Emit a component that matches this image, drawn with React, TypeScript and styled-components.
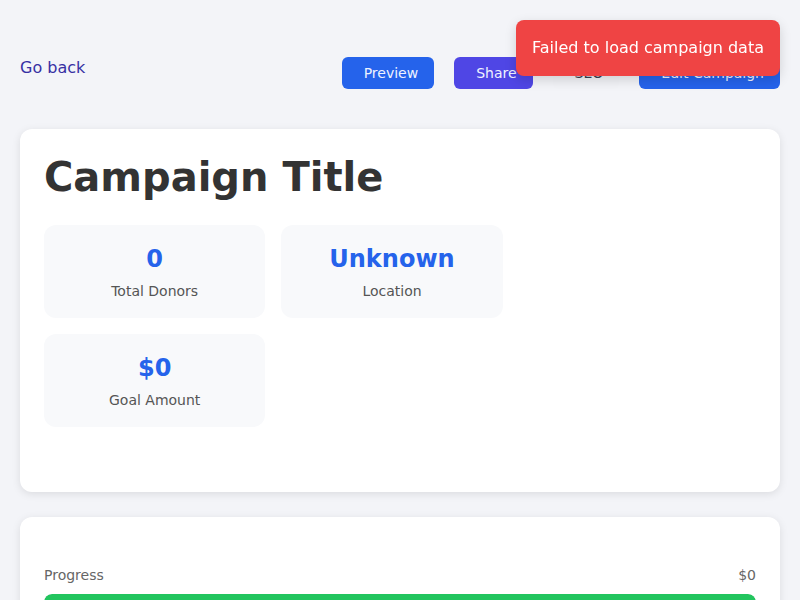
import React from "react";
import styled, { createGlobalStyle } from "styled-components";

const GlobalStyle = createGlobalStyle`
  * { box-sizing: border-box; }
  body {
    margin: 0;
    background: #f3f4f8;
    font-family: "DejaVu Sans", "Liberation Sans", sans-serif;
    color: #333;
  }
`;

const Page = styled.div`
  padding: 20px;
`;

const Header = styled.header`
  display: flex;
  justify-content: space-between;
  align-items: flex-start;
  margin-top: 37px;
  margin-bottom: 40px;
`;

const BackLink = styled.a`
  display: block;
  margin-top: 1px;
  color: #3730a3;
  font-size: 16px;
  text-decoration: none;
  cursor: pointer;
`;

const Actions = styled.div`
  display: flex;
  gap: 20px;
`;

const ActionButton = styled.button<{ $variant: "primary" | "indigo" | "plain" }>`
  height: 32px;
  padding: 0 16px 0 22px;
  border: none;
  border-radius: 6px;
  font-family: inherit;
  font-size: 14px;
  cursor: pointer;
  background: ${(p) =>
    p.$variant === "primary" ? "#2563eb" : p.$variant === "indigo" ? "#4f46e5" : "#f2f3f7"};
  color: ${(p) => (p.$variant === "plain" ? "#374151" : "#eef2ff")};
`;

const Card = styled.section<{ $padBottom?: number }>`
  background: #ffffff;
  border-radius: 12px;
  box-shadow: 0 2px 8px rgba(0, 0, 0, 0.1);
  padding: 24px 24px ${(p) => p.$padBottom ?? 24}px;
  margin-bottom: 25px;
`;

const Title = styled.h1`
  margin: 0 0 24px;
  font-size: 40px;
  line-height: 1.2;
  font-weight: 700;
  color: #333;
`;

const Layout = styled.div`
  display: grid;
  grid-template-columns: 2fr 1fr;
  gap: 24px;
`;

const StatsGrid = styled.div`
  display: grid;
  grid-template-columns: 1fr 1fr;
  gap: 16px;
`;

const Stat = styled.div`
  background: #f8f9fb;
  border-radius: 12px;
  padding: 20px 20px 19px;
  text-align: center;
`;

const StatValue = styled.div`
  font-size: 24px;
  line-height: 1.2;
  font-weight: 700;
  color: #2563eb;
  margin-bottom: 9px;
`;

const StatLabel = styled.div`
  font-size: 14px;
  color: #555;
`;

const ProgressBlock = styled.div`
  margin-top: 26px;
`;

const ProgressRow = styled.div`
  display: flex;
  justify-content: space-between;
  font-size: 14px;
  color: #666;
  margin-bottom: 11px;
`;

const Track = styled.div`
  height: 16px;
  border-radius: 8px;
  background: #e5e7eb;
  overflow: hidden;
`;

const Fill = styled.div`
  height: 100%;
  background: #22c55e;
  border-radius: 8px;
`;

const Toast = styled.div`
  position: fixed;
  top: 20px;
  right: 20px;
  background: #ef4444;
  color: #fff;
  font-size: 16px;
  line-height: 24px;
  padding: 16px;
  border-radius: 8px;
  box-shadow: 0 4px 12px rgba(0, 0, 0, 0.15);
  z-index: 10;
`;

const stats = [
  { value: "0", label: "Total Donors" },
  { value: "Unknown", label: "Location" },
  { value: "$0", label: "Goal Amount" },
];

export default function App() {
  const progress = 100;
  return (
    <>
      <GlobalStyle />
      <Page>
        <Header>
          <BackLink>Go back</BackLink>
          <Actions>
            <ActionButton $variant="primary">Preview</ActionButton>
            <ActionButton $variant="indigo">Share</ActionButton>
            <ActionButton $variant="plain">SEO</ActionButton>
            <ActionButton $variant="primary">Edit Campaign</ActionButton>
          </Actions>
        </Header>

        <Card $padBottom={65}>
          <Title>Campaign Title</Title>
          <Layout>
            <StatsGrid>
              {stats.map((s) => (
                <Stat key={s.label}>
                  <StatValue>{s.value}</StatValue>
                  <StatLabel>{s.label}</StatLabel>
                </Stat>
              ))}
            </StatsGrid>
            <div />
          </Layout>
        </Card>

        <Card>
          <ProgressBlock>
            <ProgressRow>
              <span>Progress</span>
              <span>$0</span>
            </ProgressRow>
            <Track>
              <Fill style={{ width: `${progress}%` }} />
            </Track>
          </ProgressBlock>
        </Card>
      </Page>
      <Toast>Failed to load campaign data</Toast>
    </>
  );
}
